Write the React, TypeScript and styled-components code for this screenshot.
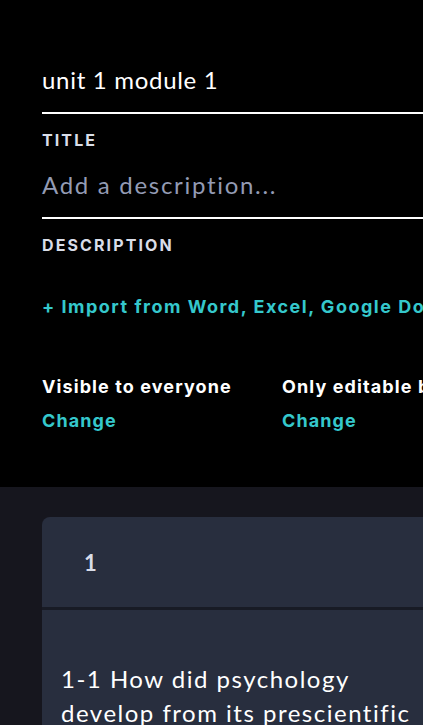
import styled, { createGlobalStyle } from "styled-components";

const GlobalStyle = createGlobalStyle`
    html, body {
        margin: 0;
        padding: 0;
        background: #000;
        overflow: hidden;
    }
    body {
        font-family: Lato, "Open Sans", sans-serif;
        color: #fff;
    }
`;

const Page = styled.div`
    display: flex;
    flex-direction: column;
    width: 900px;
    min-height: 725px;
`;

const TopSection = styled.section`
    background: #000;
    padding: 64px 42px 0 42px;
    height: 487px;
    box-sizing: border-box;
    display: flex;
    flex-direction: column;
`;

const Field = styled.div<{ $top?: number }>`
    display: flex;
    flex-direction: column;
    margin-top: ${(p) => p.$top ?? 0}px;
`;

const FieldValue = styled.div<{ $placeholder?: boolean }>`
    font-size: 24px;
    line-height: 32px;
    letter-spacing: ${(p) => (p.$placeholder ? 1.7 : 0.7)}px;
    padding-bottom: 16px;
    border-bottom: 2px solid #fff;
    color: ${(p) => (p.$placeholder ? "#939bb4" : "#fff")};
    white-space: nowrap;
`;

const FieldLabel = styled.div`
    margin-top: 16px;
    font-family: Inter, Lato, sans-serif;
    font-size: 16px;
    line-height: 20px;
    font-weight: 700;
    letter-spacing: 2.1px;
    text-transform: uppercase;
    color: #d9dde8;
`;

const ImportLink = styled.a`
    margin-top: 40px;
    font-family: Inter, Lato, sans-serif;
    font-size: 18px;
    line-height: 24px;
    font-weight: 700;
    letter-spacing: 1.5px;
    color: #35c8cc;
    white-space: nowrap;
    text-decoration: none;
`;

const SettingsRow = styled.div`
    display: flex;
    margin-top: 56px;
`;

const Setting = styled.div`
    display: flex;
    flex-direction: column;
    width: 240px;
    gap: 10px;
`;

const SettingTitle = styled.div`
    font-family: Inter, Lato, sans-serif;
    font-size: 18px;
    line-height: 24px;
    font-weight: 700;
    letter-spacing: 1.1px;
    color: #fff;
    white-space: nowrap;
`;

const SettingLink = styled.a`
    font-family: Inter, Lato, sans-serif;
    font-size: 18px;
    line-height: 24px;
    font-weight: 700;
    letter-spacing: 1.1px;
    color: #35c8cc;
    text-decoration: none;
`;

const BottomSection = styled.section`
    flex: 1;
    background: #16161e;
    padding: 30px 42px 0 42px;
`;

const Card = styled.div`
    background: #282e3e;
    border-radius: 8px 8px 0 0;
    display: flex;
    flex-direction: column;
`;

const CardHeader = styled.div`
    height: 90px;
    display: flex;
    align-items: center;
    padding-left: 42px;
    border-bottom: 3px solid #181b25;
    font-size: 22px;
    font-weight: 700;
    color: #d9dde8;
`;

const CardBody = styled.div`
    padding: 52px 20px 0 19px;
    font-size: 24px;
    line-height: 34px;
    letter-spacing: 1.5px;
    color: #fff;
    width: 350px;
`;

const App = () => {
    return (
        <>
            <GlobalStyle />
            <Page>
                <TopSection>
                    <Field>
                        <FieldValue>unit 1 module 1</FieldValue>
                        <FieldLabel>Title</FieldLabel>
                    </Field>
                    <Field $top={19}>
                        <FieldValue $placeholder>Add a description...</FieldValue>
                        <FieldLabel>Description</FieldLabel>
                    </Field>
                    <ImportLink>+ Import from Word, Excel, Google Docs, etc.</ImportLink>
                    <SettingsRow>
                        <Setting>
                            <SettingTitle>Visible to everyone</SettingTitle>
                            <SettingLink>Change</SettingLink>
                        </Setting>
                        <Setting>
                            <SettingTitle>Only editable by me</SettingTitle>
                            <SettingLink>Change</SettingLink>
                        </Setting>
                    </SettingsRow>
                </TopSection>
                <BottomSection>
                    <Card>
                        <CardHeader>1</CardHeader>
                        <CardBody>
                            1-1 How did psychology develop from its prescientific roots?
                        </CardBody>
                    </Card>
                </BottomSection>
            </Page>
        </>
    );
};

export default App;
